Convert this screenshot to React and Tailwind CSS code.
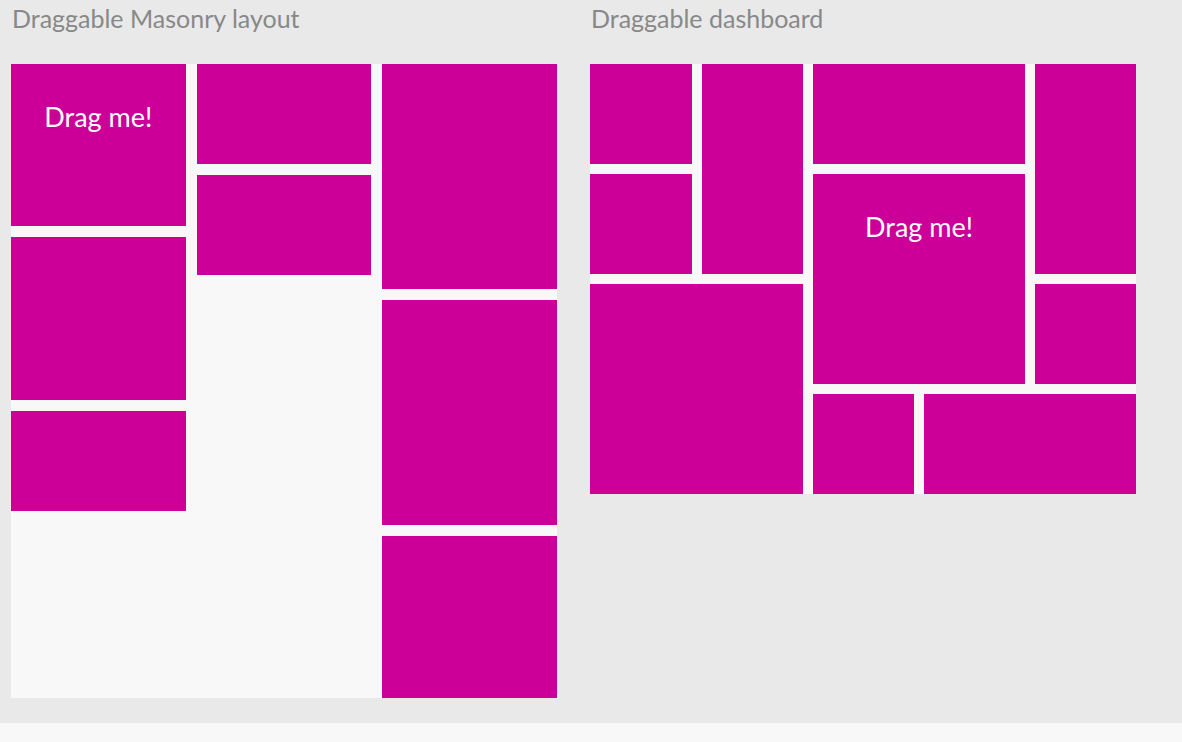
const font = { fontFamily: 'Lato, "Open Sans", sans-serif' }

function Tile({ className = '', children }) {
  return (
    <div className={`bg-[#cc0099] text-white text-center text-[27px] ${className}`}>
      {children}
    </div>
  )
}

function DragMe() {
  return <p className="pt-[38px] leading-[30px]">Drag me!</p>
}

export default function App() {
  return (
    <div className="min-h-screen bg-[#f8f8f8]" style={font}>
      <div className="h-[723px] bg-[#e9e9e9] pl-[11px] flex gap-[33px]">
        {/* Masonry */}
        <section className="w-[546px]">
          <h2 className="text-[25px] leading-[36px] text-[#888888] pl-[1px] h-[64px]">Draggable Masonry layout</h2>
          <div className="bg-[#f8f8f8] h-[634px] grid grid-cols-3 gap-x-[11px] items-start">
            <div className="flex flex-col gap-[11px]">
              <Tile className="h-[162px]"><DragMe /></Tile>
              <Tile className="h-[163px]" />
              <Tile className="h-[100px]" />
            </div>
            <div className="flex flex-col gap-[11px]">
              <Tile className="h-[100px]" />
              <Tile className="h-[100px]" />
            </div>
            <div className="flex flex-col gap-[11px]">
              <Tile className="h-[225px]" />
              <Tile className="h-[225px]" />
              <Tile className="h-[162px]" />
            </div>
          </div>
        </section>

        {/* Dashboard */}
        <section className="w-[546px]">
          <h2 className="text-[25px] leading-[36px] text-[#888888] pl-[1px] h-[64px]">Draggable dashboard</h2>
          <div className="bg-[#f8f8f8] grid grid-cols-[102px_101px_101px_101px_101px] grid-rows-[repeat(4,100px)] gap-[10px]">
            <Tile className="col-start-1 row-start-1" />
            <Tile className="col-start-1 row-start-2" />
            <Tile className="col-start-2 row-start-1 row-span-2" />
            <Tile className="col-start-3 col-span-2 row-start-1" />
            <Tile className="col-start-3 col-span-2 row-start-2 row-span-2"><DragMe /></Tile>
            <Tile className="col-start-5 row-start-1 row-span-2" />
            <Tile className="col-start-5 row-start-3" />
            <Tile className="col-start-1 col-span-2 row-start-3 row-span-2" />
            <Tile className="col-start-3 row-start-4" />
            <Tile className="col-start-4 col-span-2 row-start-4" />
          </div>
        </section>
      </div>
    </div>
  )
}
